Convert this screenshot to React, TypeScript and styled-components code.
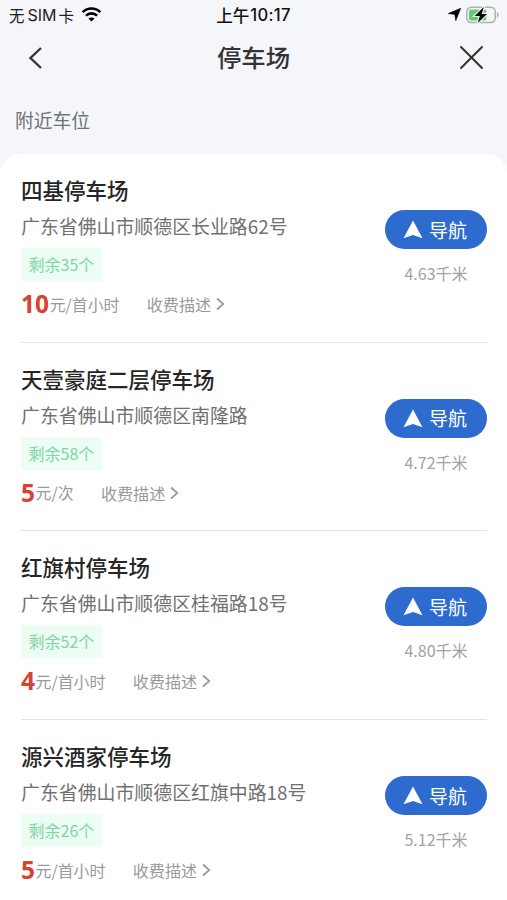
import React from 'react';
import styled, { createGlobalStyle } from 'styled-components';

const GlobalStyle = createGlobalStyle`
  * { box-sizing: border-box; }
  body {
    margin: 0;
    background: #f5f6f9;
    font-family: "Noto Sans CJK SC", "Noto Sans", sans-serif;
    overflow: hidden;
  }
`;

const Screen = styled.div`
  width: 507px;
  height: 900px;
  display: flex;
  flex-direction: column;
  overflow: hidden;
  background: #f5f6f9;
`;

const StatusBar = styled.div`
  flex: none;
  height: 29px;
  display: grid;
  grid-template-columns: 1fr auto 1fr;
  align-items: center;
  padding: 0 8px 0 9px;
  color: #111;
`;

const Carrier = styled.div`
  display: flex;
  align-items: center;
  font-size: 15.5px;
  line-height: 28px;
  color: #222;
`;

const Latin = styled.span`
  font-family: Inter, sans-serif;
  font-size: 16px;
  margin: 0 2px 0 3px;
`;

const WifiIcon = styled.svg`
  width: 21px;
  height: 15px;
  margin-left: 7px;
`;

const Clock = styled.div`
  display: flex;
  align-items: center;
  margin-right: 1px;
  font-size: 16.6px;
  font-weight: 500;
  line-height: 28px;
`;

const Time = styled.span`
  font-family: Inter, sans-serif;
  font-size: 16.6px;
  font-weight: 500;
  letter-spacing: 0.3px;
  margin-left: 1px;
`;

const Indicators = styled.div`
  display: flex;
  justify-content: flex-end;
  align-items: center;
  gap: 5px;
`;

const NavBar = styled.header`
  flex: none;
  height: 57px;
  display: grid;
  grid-template-columns: 1fr auto 1fr;
  align-items: center;
  padding: 0 23px 0 27px;
`;

const PageTitle = styled.h1`
  margin: 0 4px 1px 0;
  font-size: 24.4px;
  line-height: 34px;
  font-weight: 500;
  color: #333;
`;

const IconButton = styled.button<{ $end?: boolean }>`
  display: flex;
  justify-self: ${(p) => (p.$end ? 'end' : 'start')};
  padding: 0;
  border: 0;
  background: none;
`;

const SectionLabel = styled.h2`
  flex: none;
  margin: 0;
  height: 68px;
  padding: 19px 0 0 15px;
  font-size: 18.8px;
  line-height: 30px;
  font-weight: 400;
  color: #707276;
`;

const List = styled.main`
  flex: 1;
  min-height: 0;
  overflow: hidden;
  padding: 0 20px 0 21px;
  background: #fff;
  border-radius: 20px 20px 0 0;
`;

const Row = styled.article`
  height: 188.7px;
  display: flex;
  justify-content: space-between;
  padding-top: 22px;
  border-bottom: 1.4px solid #e3e3e3;
`;

const Details = styled.div`
  display: flex;
  flex-direction: column;
  align-items: flex-start;
  white-space: nowrap;
`;

const Name = styled.h3`
  margin: 0;
  font-size: 21.5px;
  line-height: 28px;
  font-weight: 500;
  color: #262626;
`;

const Address = styled.p`
  margin: 8px 0 0;
  font-size: 18.9px;
  line-height: 28px;
  color: #707070;
`;

const Remaining = styled.span`
  margin-top: 8px;
  height: 33px;
  padding: 0 7.5px;
  border-radius: 2px;
  background: #ecfdf4;
  font-size: 16px;
  line-height: 32px;
  color: #80d5a2;
`;

const Fee = styled.div`
  display: flex;
  align-items: center;
  margin-top: 8px;
  height: 30px;
  font-size: 15.9px;
  color: #999;
`;

const Price = styled.strong`
  margin-right: 0.6px;
  font-family: "Noto Sans", sans-serif;
  font-size: 24.5px;
  line-height: 30px;
  font-weight: 700;
  color: #d8432f;
`;

const FeeLink = styled.span`
  display: flex;
  align-items: center;
  gap: 4.5px;
  margin-left: 27.3px;
  font-size: 16.1px;
`;

const Actions = styled.div`
  width: 102px;
  padding-top: 34px;
  display: flex;
  flex-direction: column;
  align-items: center;
`;

const NavigateButton = styled.button`
  width: 102px;
  height: 39px;
  display: flex;
  align-items: center;
  justify-content: center;
  gap: 6px;
  padding: 0 2px 0 0;
  border: 0;
  border-radius: 20px;
  background: #2d6bce;
  color: #fff;
  font-family: inherit;
  font-size: 19px;
  line-height: 38px;
`;

const Distance = styled.span`
  margin-top: 12px;
  font-size: 16px;
  line-height: 24px;
  color: #a2a2a2;
`;

interface Lot {
  name: string;
  address: string;
  remaining: number;
  price: number;
  unit: string;
  distance: string;
}

const lots: Lot[] = [
  { name: '四基停车场', address: '广东省佛山市顺德区长业路62号', remaining: 35, price: 10, unit: '首小时', distance: '4.63' },
  { name: '天壹豪庭二层停车场', address: '广东省佛山市顺德区南隆路', remaining: 58, price: 5, unit: '次', distance: '4.72' },
  { name: '红旗村停车场', address: '广东省佛山市顺德区桂福路18号', remaining: 52, price: 4, unit: '首小时', distance: '4.80' },
  { name: '源兴酒家停车场', address: '广东省佛山市顺德区红旗中路18号', remaining: 26, price: 5, unit: '首小时', distance: '5.12' },
];

function ParkingRow({ lot }: { lot: Lot }) {
  return (
    <Row>
      <Details>
        <Name>{lot.name}</Name>
        <Address>{lot.address}</Address>
        <Remaining>{`剩余${lot.remaining}个`}</Remaining>
        <Fee>
          <Price>{lot.price}</Price>
          <span>{`元/${lot.unit}`}</span>
          <FeeLink>
            收费描述
            <svg width="9" height="14" viewBox="0 0 9 14" fill="none" stroke="#999" strokeWidth="1.7">
              <path d="M1 1.5 7.3 7 1 12.5" />
            </svg>
          </FeeLink>
        </Fee>
      </Details>
      <Actions>
        <NavigateButton>
          <svg width="20" height="19" viewBox="0 0 20 19" fill="#fff">
            <path d="M10 .5 19.5 18.3 10 15 .5 18.3Z" />
          </svg>
          导航
        </NavigateButton>
        <Distance>{`${lot.distance}千米`}</Distance>
      </Actions>
    </Row>
  );
}

export default function App() {
  return (
    <Screen>
      <GlobalStyle />
      <StatusBar>
        <Carrier>
          无<Latin>SIM</Latin>卡
          <WifiIcon viewBox="0 0 20 15" fill="none" stroke="#000" strokeWidth="2.6">
            <path d="M1.2 5.1C6.2.3 13.8.3 18.8 5.1" />
            <path d="M4.4 8.6c3.2-3 8-3 11.2 0" />
            <path d="M10 14.6 6.9 11.6c1.8-1.5 4.4-1.5 6.2 0Z" fill="#000" stroke="none" />
          </WifiIcon>
        </Carrier>
        <Clock>
          上午<Time>10:17</Time>
        </Clock>
        <Indicators>
          <svg width="13" height="13" viewBox="0 0 13 13">
            <path d="M12.7.3 7.8 12.6 6.8 6.4.3 5.6Z" fill="#000" stroke="#000" strokeWidth=".6" strokeLinejoin="round" />
          </svg>
          <svg width="33" height="18" viewBox="0 0 33 18">
            <rect x=".8" y="1.3" width="28.4" height="15.2" rx="4.5" fill="none" stroke="#adb0b1" strokeWidth="1.5" />
            <path d="M31 6.3c2.2.7 2.2 4.5 0 5.2Z" fill="#adb0b1" />
            <rect x="3" y="3.4" width="17.5" height="11" rx="2" fill="#63cc70" />
            <path d="M17.8 1 8.6 10h5.2l-2 7L21 7.9h-5.2Z" fill="#000" stroke="#f5f6f9" strokeWidth="2.2" paintOrder="stroke" />
          </svg>
        </Indicators>
      </StatusBar>
      <NavBar>
        <IconButton aria-label="返回">
          <svg width="16" height="24" viewBox="0 0 16 24" fill="none" stroke="#333" strokeWidth="2.4">
            <path d="M14 2 3.5 12 14 22" />
          </svg>
        </IconButton>
        <PageTitle>停车场</PageTitle>
        <IconButton $end aria-label="关闭">
          <svg width="25" height="25" viewBox="0 0 25 25" fill="none" stroke="#333" strokeWidth="2" strokeLinecap="round">
            <path d="m2 2 21 21M23 2 2 23" />
          </svg>
        </IconButton>
      </NavBar>
      <SectionLabel>附近车位</SectionLabel>
      <List>
        {lots.map((lot) => (
          <ParkingRow key={lot.name} lot={lot} />
        ))}
      </List>
    </Screen>
  );
}
